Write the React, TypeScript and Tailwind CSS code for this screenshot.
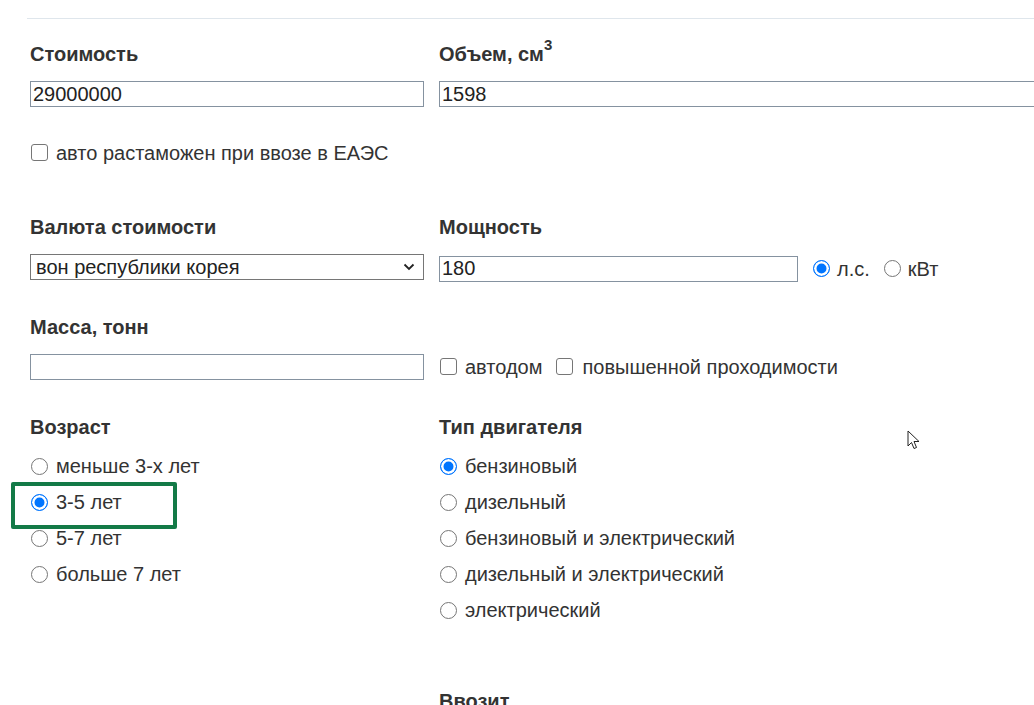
import { ReactNode } from 'react';

function Label({ children, className = '' }: { children: ReactNode; className?: string }) {
  return <div className={`text-[20px] leading-[23px] font-bold text-[#333] ${className}`}>{children}</div>;
}

function Radio({ checked = false }: { checked?: boolean }) {
  return (
    <input
      type="radio"
      defaultChecked={checked}
      className="appearance-none shrink-0 w-[17px] h-[17px] rounded-full border border-[#767676] bg-white checked:border-[#0075ff] checked:bg-[#0075ff] checked:shadow-[inset_0_0_0_2.5px_white]"
    />
  );
}

function Checkbox() {
  return (
    <input
      type="checkbox"
      className="appearance-none shrink-0 w-[17px] h-[17px] rounded-[3px] border border-[#767676] bg-white"
    />
  );
}

function RadioRow({ label, checked, children }: { label: string; checked?: boolean; children?: ReactNode }) {
  return (
    <label className="relative flex items-center gap-[8px] h-[36px] pl-[1px]">
      <Radio checked={checked} />
      <span>{label}</span>
      {children}
    </label>
  );
}

const inputCls =
  'h-[26px] border border-[#8592a0] bg-white px-[2px] text-[20px] leading-[24px] text-[#222] outline-none';

export default function App() {
  return (
    <div
      className="relative min-h-[705px] bg-white text-[20px] text-[#333] overflow-hidden"
      style={{ fontFamily: '"Liberation Sans", Arial, sans-serif' }}
    >
      <div className="ml-[27px] pt-[18px]">
        <div className="h-px bg-[#dfe6ec]" />
      </div>

      <div className="pl-[30px]">
        {/* стоимость / объем */}
        <div className="flex gap-[15px] mt-[24px]">
          <div className="w-[394px]">
            <Label>Стоимость</Label>
            <input className={`${inputCls} w-[394px] mt-[15px]`} defaultValue="29000000" />
          </div>
          <div className="flex-1">
            <Label>
              Объем, см<sup className="text-[15px] relative -top-[11px]">3</sup>
            </Label>
            <input className={`${inputCls} w-[640px] mt-[15px]`} defaultValue="1598" />
          </div>
        </div>

        <label className="flex items-center gap-[8px] h-[24px] mt-[32px] pl-[1px]">
          <Checkbox />
          <span>авто растаможен при ввозе в ЕАЭС</span>
        </label>

        {/* валюта / мощность */}
        <div className="flex gap-[15px] mt-[51px]">
          <div className="w-[394px]">
            <Label>Валюта стоимости</Label>
            <div className="mt-[15px] flex items-center justify-between h-[26px] w-[394px] border border-[#767676] bg-white pl-[5px] pr-[8px] text-[#222]">
              <span className="leading-[24px]">вон республики корея</span>
              <svg width="12" height="8" viewBox="0 0 12 8" fill="none">
                <path d="M1.5 1.5 L6 6 L10.5 1.5" stroke="#222" strokeWidth="1.8" />
              </svg>
            </div>
          </div>
          <div className="flex-1">
            <Label>Мощность</Label>
            <div className="mt-[17px] flex items-center h-[26px]">
              <input className={`${inputCls} w-[359px]`} defaultValue="180" />
              <label className="flex items-center gap-[7px] ml-[15px]">
                <Radio checked />
                <span>л.с.</span>
              </label>
              <label className="flex items-center gap-[7px] ml-[14px]">
                <Radio />
                <span>кВт</span>
              </label>
            </div>
          </div>
        </div>

        {/* масса */}
        <div className="flex gap-[15px] mt-[34px]">
          <div className="w-[394px]">
            <Label>Масса, тонн</Label>
            <input className={`${inputCls} w-[394px] mt-[15px] bg-[#fcfcfc]`} />
          </div>
          <div className="flex-1 pt-[38px]">
            <div className="flex items-center h-[26px] pl-[1px]">
              <label className="flex items-center gap-[8px]">
                <Checkbox />
                <span>автодом</span>
              </label>
              <label className="flex items-center gap-[9px] ml-[14px]">
                <Checkbox />
                <span>повышенной проходимости</span>
              </label>
            </div>
          </div>
        </div>

        {/* возраст / тип двигателя */}
        <div className="flex gap-[15px] mt-[35px]">
          <div className="w-[394px]">
            <Label>Возраст</Label>
            <div className="mt-[9px]">
              <RadioRow label="меньше 3-х лет" />
              <RadioRow label="3-5 лет" checked>
                <span className="absolute left-[-19px] top-[-2px] w-[166px] h-[47px] border-4 border-[#137a47] rounded-[2px] pointer-events-none" />
              </RadioRow>
              <RadioRow label="5-7 лет" />
              <RadioRow label="больше 7 лет" />
            </div>
          </div>
          <div className="flex-1">
            <Label>Тип двигателя</Label>
            <div className="mt-[9px]">
              <RadioRow label="бензиновый" checked />
              <RadioRow label="дизельный" />
              <RadioRow label="бензиновый и электрический" />
              <RadioRow label="дизельный и электрический" />
              <RadioRow label="электрический" />
            </div>
            <Label className="mt-[62px]">Ввозит</Label>
          </div>
        </div>
      </div>

      {/* mouse cursor */}
      <svg className="absolute left-[907px] top-[430px]" width="13" height="20" viewBox="0 0 13 20">
        <path
          d="M1 1 L1 16 L4.5 12.5 L7 18.5 L9.5 17.5 L7 11.5 L12 11.5 Z"
          fill="white"
          stroke="#222"
          strokeWidth="1"
          strokeLinejoin="round"
        />
      </svg>
    </div>
  );
}
